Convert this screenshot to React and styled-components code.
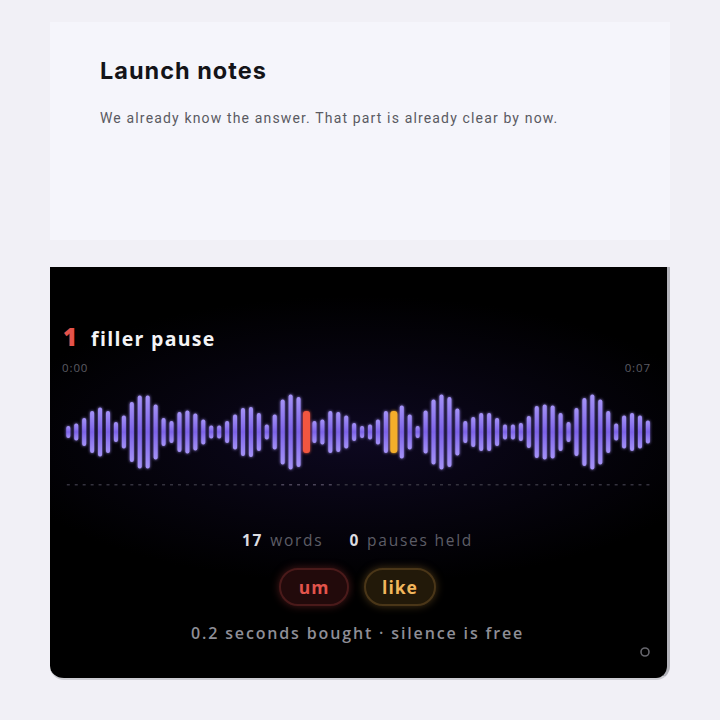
import React from "react";
import styled, { createGlobalStyle } from "styled-components";

const GlobalStyle = createGlobalStyle`
  body {
    margin: 0;
    background: #f1f0f6;
    font-family: "Inter", "Roboto", sans-serif;
  }
`;

// heights of the bars, left to right (px)
const BARS = [
  12, 17, 28, 42, 49, 42, 20, 33, 60, 73, 73, 55, 28, 22, 40, 43, 37, 25, 13,
  13, 22, 35, 48, 50, 38, 15, 35, 65, 75, 70, 42, 22, 25, 42, 40, 33, 18, 12,
  15, 25, 42, 42, 53, 35, 12, 43, 65, 75, 70, 47, 22, 30, 38, 38, 28, 15, 15,
  18, 32, 52, 55, 53, 38, 20, 48, 68, 75, 65, 42, 17, 33, 38, 33, 23,
];
const FILLERS = { 30: "um", 41: "like" };

const Page = styled.div`
  padding: 22px 50px 40px 50px;
  display: flex;
  flex-direction: column;
  gap: 27px;
`;

const NoteCard = styled.div`
  height: 218px;
  background: #f5f5fb;
  padding: 34px 50px 0 50px;
  box-sizing: border-box;
`;

const Title = styled.h1`
  margin: 0;
  font-family: "Inter", "Roboto", sans-serif;
  font-size: 23.5px;
  font-weight: 700;
  color: #141418;
  letter-spacing: 1px;
`;

const Lead = styled.p`
  margin: 25px 0 0 0;
  font-family: "Roboto", sans-serif;
  font-size: 14px;
  color: #5a5a62;
  letter-spacing: 1.15px;
`;

const Panel = styled.div`
  height: 413px;
  box-sizing: border-box;
  background: radial-gradient(ellipse 60% 35% at 50% 42%, #0d0820 0%, #000 100%);
  border-right: 3px solid #b3b3ba;
  border-bottom: 2px solid #cdcdd3;
  border-radius: 0 0 14px 14px;
  padding: 53px 14px 0 12px;
  display: flex;
  flex-direction: column;
  font-family: "Open Sans", sans-serif;
`;

const Headline = styled.div`
  display: flex;
  align-items: baseline;
  gap: 14px;
  padding-left: 1px;
`;

const Count = styled.span`
  font-size: 24px;
  font-weight: 800;
  color: #e4534b;
`;

const Label = styled.span`
  font-size: 19.5px;
  font-weight: 700;
  color: #f4f4f6;
  letter-spacing: 1.3px;
`;

const Times = styled.div`
  display: flex;
  justify-content: space-between;
  margin-top: 7px;
  font-size: 11.5px;
  color: #5c5c64;
  letter-spacing: 0.9px;
  padding-right: 2px;
`;

const Wave = styled.svg`
  display: block;
  margin-top: 12px;
  margin-left: -2px;
`;

const Stats = styled.div`
  display: flex;
  justify-content: center;
  gap: 26px;
  margin-top: 42px;
  font-size: 15.5px;
  color: #5d5d66;
  letter-spacing: 1.75px;
`;

const Stat = styled.span`
  b {
    color: #dcdce0;
    font-weight: 700;
    margin-right: 7px;
  }
`;

const Chips = styled.div`
  display: flex;
  justify-content: center;
  gap: 15px;
  margin-top: 17px;
`;

const Chip = styled.span`
  height: 38px;
  min-width: 70px;
  padding: 0 16px;
  box-sizing: border-box;
  border-radius: 19px;
  display: inline-flex;
  align-items: center;
  justify-content: center;
  font-size: 17.5px;
  font-weight: 700;
  letter-spacing: 1px;
  color: ${(p) => p.$fg};
  background: ${(p) => p.$bg};
  border: 2px solid ${(p) => p.$line};
  box-shadow: 0 0 8px ${(p) => p.$line};
`;

const Footer = styled.div`
  margin-top: 16px;
  text-align: center;
  font-size: 16px;
  font-weight: 600;
  color: #8e8e96;
  letter-spacing: 1.85px;
`;

const Corner = styled.div`
  display: flex;
  justify-content: flex-end;
  padding-right: 2px;
  margin-top: 2px;
`;

const Waveform = () => {
  const step = 7.94;
  const cy = 45;
  return (
    <Wave width="600" height="100" viewBox="0 0 600 100">
      <defs>
        <linearGradient id="violet" x1="0" y1="0" x2="0" y2="1">
          <stop offset="0" stopColor="#a593f8" />
          <stop offset="0.5" stopColor="#7d63e8" />
          <stop offset="1" stopColor="#a593f8" />
        </linearGradient>
        <filter id="glow" x="-50%" y="-20%" width="200%" height="140%">
          <feGaussianBlur stdDeviation="1.8" result="b" />
          <feMerge>
            <feMergeNode in="b" />
            <feMergeNode in="SourceGraphic" />
          </feMerge>
        </filter>
      </defs>
      <g filter="url(#glow)">
        {BARS.map((h, i) => {
          const cx = 8.3 + i * step;
          const filler = FILLERS[i];
          const w = filler ? 7 : 4;
          const fill = filler === "um" ? "#f2573f" : filler === "like" ? "#f4ae2c" : "url(#violet)";
          return (
            <rect
              key={i}
              x={cx - w / 2}
              y={cy - h / 2}
              width={w}
              height={h}
              rx={filler ? 3 : 2}
              fill={fill}
            />
          );
        })}
      </g>
      {BARS.map((_, i) => (
        <rect
          key={"d" + i}
          x={8.3 + i * step - 1.5}
          y="97"
          width="3"
          height="1.5"
          fill={i > 26 && i < 34 ? "#4a4458" : "#34323e"}
        />
      ))}
    </Wave>
  );
};

export default function App() {
  return (
    <>
      <GlobalStyle />
      <Page>
        <NoteCard>
          <Title>Launch notes</Title>
          <Lead>We already know the answer. That part is already clear by now.</Lead>
        </NoteCard>
        <Panel>
          <Headline>
            <Count>1</Count>
            <Label>filler pause</Label>
          </Headline>
          <Times>
            <span>0:00</span>
            <span>0:07</span>
          </Times>
          <Waveform />
          <Stats>
            <Stat>
              <b>17</b>words
            </Stat>
            <Stat>
              <b>0</b>pauses held
            </Stat>
          </Stats>
          <Chips>
            <Chip $fg="#e2544c" $bg="#220a0b" $line="#4a1a1a">um</Chip>
            <Chip $fg="#f2b65c" $bg="#221909" $line="#4a3618">like</Chip>
          </Chips>
          <Footer>0.2 seconds bought · silence is free</Footer>
          <Corner>
            <svg width="12" height="12" viewBox="0 0 12 12">
              <circle cx="6" cy="6" r="4" fill="none" stroke="#66666d" strokeWidth="1.6" />
            </svg>
          </Corner>
        </Panel>
      </Page>
    </>
  );
}
